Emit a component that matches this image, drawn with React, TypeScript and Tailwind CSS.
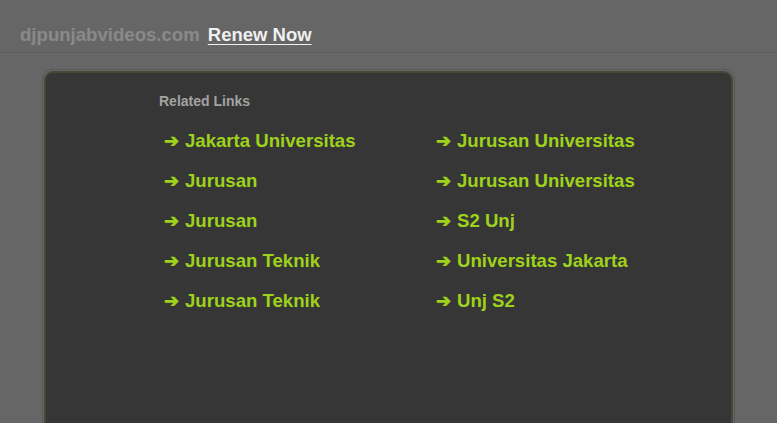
const left = ["Jakarta Universitas", "Jurusan", "Jurusan", "Jurusan Teknik", "Jurusan Teknik"];
const right = ["Jurusan Universitas", "Jurusan Universitas", "S2 Unj", "Universitas Jakarta", "Unj S2"];

function LinkItem({ label }: { label: string }) {
  return (
    <a href="#" className="flex h-[40px] items-center gap-[6px] text-[18.6px] font-bold text-[#9ed21a] no-underline">
      <span className="text-[18px]">➔</span>
      <span>{label}</span>
    </a>
  );
}

export default function App() {
  return (
    <div className="h-[423px] w-[777px] overflow-hidden bg-[#666666] font-['Liberation_Sans',Arial,sans-serif]">
      {/* Top bar */}
      <div className="flex h-[53px] items-center gap-[8px] border-b border-[#5a5a5a] pl-[20px] pt-[18px] shadow-[0_1px_0_#6e6e6e]">
        <span className="text-[18.6px] font-bold text-[#8a8a8a]">djpunjabvideos.com</span>
        <a href="#" className="text-[18.5px] font-bold text-[#f0f0f0] underline underline-offset-[3px]">
          Renew Now
        </a>
      </div>

      {/* Panel */}
      <div className="ml-[42px] mt-[16px] h-[400px] w-[693px] rounded-[10px] border border-[#585858] p-[1px]">
        <div className="h-full rounded-[9px] border-2 border-[#46493a] bg-[#363636] pl-[113px] pt-[18px]">
          <p className="text-[14px] font-bold text-[#a3a3a3]">Related Links</p>
          <div className="mt-[9px] grid w-[549px] grid-cols-2 pl-[5px]">
            <div className="flex flex-col">
              {left.map((l, i) => (
                <LinkItem key={i} label={l} />
              ))}
            </div>
            <div className="flex flex-col">
              {right.map((l, i) => (
                <LinkItem key={i} label={l} />
              ))}
            </div>
          </div>
        </div>
      </div>
    </div>
  );
}
